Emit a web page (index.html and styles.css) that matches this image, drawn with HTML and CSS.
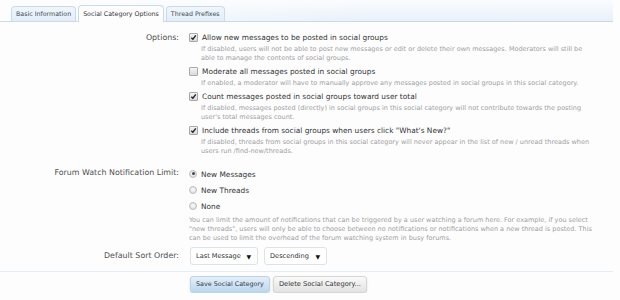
FILE: index.html
```html
<!DOCTYPE html>
<html>
<head>
<meta charset="utf-8">
<link rel="stylesheet" href="styles.css">
</head>
<body>
<div class="page">
  <div class="tabbar">
    <ul class="tabs">
      <li class="tab">Basic Information</li>
      <li class="tab active">Social Category Options</li>
      <li class="tab">Thread Prefixes</li>
    </ul>
  </div>

  <div class="form">
    <div class="row">
      <div class="lbl">Options:</div>
      <ul class="ctrl opts">
        <li class="opt">
          <div class="line"><span class="cb on"><svg viewBox="0 0 8 8"><path d="M1.5 4.2 L3.3 6 L6.6 1.6" /></svg></span>Allow new messages to be posted in social groups</div>
          <p class="hint">If disabled, users will not be able to post new messages or edit or delete their own messages. Moderators will still be able to manage the contents of social groups.</p>
        </li>
        <li class="opt">
          <div class="line"><span class="cb"></span>Moderate all messages posted in social groups</div>
          <p class="hint">If enabled, a moderator will have to manually approve any messages posted in social groups in this social category.</p>
        </li>
        <li class="opt">
          <div class="line"><span class="cb on"><svg viewBox="0 0 8 8"><path d="M1.5 4.2 L3.3 6 L6.6 1.6" /></svg></span>Count messages posted in social groups toward user total</div>
          <p class="hint">If disabled, messages posted (directly) in social groups in this social category will not contribute towards the posting user's total messages count.</p>
        </li>
        <li class="opt">
          <div class="line"><span class="cb on"><svg viewBox="0 0 8 8"><path d="M1.5 4.2 L3.3 6 L6.6 1.6" /></svg></span>Include threads from social groups when users click "What's New?"</div>
          <p class="hint">If disabled, threads from social groups in this social category will never appear in the list of new / unread threads when users run /find-new/threads.</p>
        </li>
      </ul>
    </div>

    <div class="row watch">
      <div class="lbl">Forum Watch Notification Limit:</div>
      <div class="ctrl">
        <ul class="radios">
          <li><span class="rd on"></span>New Messages</li>
          <li><span class="rd"></span>New Threads</li>
          <li><span class="rd"></span>None</li>
        </ul>
        <p class="hint wide">You can limit the amount of notifications that can be triggered by a user watching a forum here. For example, if you select "new threads", users will only be able to choose between no notifications or notifications when a new thread is posted. This can be used to limit the overhead of the forum watching system in busy forums.</p>
      </div>
    </div>

    <div class="row sort">
      <div class="lbl">Default Sort Order:</div>
      <div class="ctrl selects">
        <span class="select s1">Last Message<span class="arrow">▼</span></span>
        <span class="select s2">Descending<span class="arrow">▼</span></span>
      </div>
    </div>

    <div class="submit">
      <div class="ctrl buttons">
        <span class="btn primary">Save Social Category</span>
        <span class="btn">Delete Social Category...</span>
      </div>
    </div>
  </div>
</div>
</body>
</html>
```

FILE: styles.css
```css
html, body {
  margin: 0;
  padding: 0;
  background: #fdfdfe;
}
body {
  font-family: "DejaVu Sans", Verdana, sans-serif;
  color: #3a3a3a;
}
.page {
  width: 613px;
}
.tabbar {
  height: 21px;
  border-bottom: 1px solid #c9dbeb;
  border-top-right-radius: 4px;
  background:
    linear-gradient(to right, rgba(253,253,254,1) 0%, rgba(253,253,254,0) 60%),
    linear-gradient(to bottom, #fbfcfe 0%, #e7f0f9 100%);
}
.tabs {
  list-style: none;
  margin: 0;
  padding: 6px 0 0 11px;
  display: flex;
  gap: 2px;
  height: 15px;
}
.tab {
  height: 14px;
  line-height: 14px;
  padding: 0 4px;
  font-size: 6.3px;
  color: #3b4a58;
  background: linear-gradient(to bottom, #f1f6fb, #e3edf7);
  border: 1px solid #c9dbeb;
  border-bottom: none;
  border-radius: 4px 4px 0 0;
}
.tab.active {
  margin-top: -1px;
  height: 16px;
  line-height: 15px;
  background: #fdfdfe;
  color: #333;
  position: relative;
  z-index: 1;
}

.form {
  padding-top: 10px;
}
.row {
  display: flex;
}
.lbl {
  flex: none;
  width: 189px;
  box-sizing: border-box;
  padding-right: 10px;
  text-align: right;
  font-size: 7.9px;
  line-height: 12px;
  color: #505050;
}
.ctrl {
  margin: 0;
  padding: 0;
  list-style: none;
  width: 405px;
}
.opt {
  margin-bottom: 3px;
}
.line {
  display: flex;
  align-items: center;
  font-size: 7.4px;
  line-height: 12px;
  color: #333;
}
.cb {
  flex: none;
  width: 7px;
  height: 7px;
  margin-right: 4px;
  border: 1px solid #a9a9a9;
  border-radius: 1px;
  background: linear-gradient(to bottom, #f4f4f4, #d9d9d9);
  display: inline-flex;
  margin-top: -2px;
}
.cb svg {
  width: 7px;
  height: 7px;
}
.cb svg path {
  fill: none;
  stroke: #222;
  stroke-width: 1.6;
}
.hint {
  margin: 1px 0 0 12px;
  font-size: 6.5px;
  line-height: 9px;
  color: #a0a0a0;
  max-width: 390px;
}
.hint.wide {
  margin: 1px 0 0 0;
  max-width: 403px;
}

.watch {
  margin-top: 8px;
}
.radios {
  list-style: none;
  margin: 0;
  padding: 0;
}
.radios li {
  display: flex;
  align-items: center;
  font-size: 7.4px;
  line-height: 12px;
  height: 16px;
  color: #333;
}
.rd {
  flex: none;
  width: 8px;
  height: 8px;
  border-radius: 50%;
  margin-right: 4px;
  border: 1px solid #bdbdbd;
  box-sizing: border-box;
  background: radial-gradient(circle at 50% 40%, #fbfbfb, #d6d6d6);
  margin-top: -3px;
  position: relative;
}
.rd.on::after {
  content: "";
  position: absolute;
  left: 1.5px;
  top: 1.5px;
  width: 3px;
  height: 3px;
  border-radius: 50%;
  background: #444;
}

.sort {
  margin-top: 4px;
  align-items: center;
}
.sort .lbl {
  line-height: 18px;
}
.selects {
  display: flex;
  gap: 6px;
  margin-left: 1px;
}
.select {
  display: flex;
  align-items: center;
  justify-content: space-between;
  height: 18px;
  box-sizing: border-box;
  padding: 0 6px 0 5px;
  border: 1px solid #dde3e8;
  border-radius: 3px;
  background: #fff;
  font-size: 6.6px;
  color: #333;
}
.s1 { width: 68px; }
.s2 { width: 63px; }
.arrow {
  font-size: 6px;
  color: #111;
}

.submit {
  margin-top: 6px;
  border-top: 1px solid #e4edf5;
  padding-top: 4px;
  padding-left: 189px;
  display: flex;
}
.buttons {
  display: flex;
  gap: 3px;
  margin-left: 1px;
}
.btn {
  height: 15px;
  line-height: 15px;
  padding: 0 5px;
  font-size: 6.4px;
  color: #333;
  border-radius: 3px;
  border: 1px solid #d6d6d6;
  background: linear-gradient(to bottom, #fafafa, #e2e2e2);
  box-shadow: 0 1px 2px rgba(0,0,0,0.15);
}
.btn.primary {
  border-color: #bcd3e6;
  background: linear-gradient(to bottom, #e4eff9, #bdd6eb);
  color: #2f3e4c;
}
.btn + .btn {
  font-size: 6.7px;
}
```
